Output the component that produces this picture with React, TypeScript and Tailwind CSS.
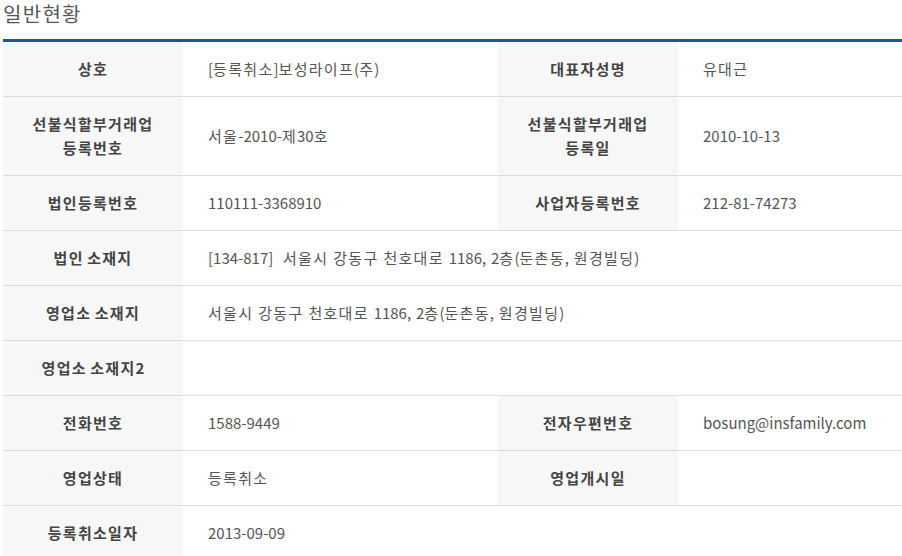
const font = { fontFamily: '"Noto Sans CJK KR", "Noto Sans", sans-serif' }

type Row = { label: string; value: string; label2?: string; value2?: string; tall?: boolean; wide?: boolean }

const rows: Row[] = [
  { label: "상호", value: "[등록취소]보성라이프(주)", label2: "대표자성명", value2: "유대근" },
  {
    label: "선불식할부거래업\n등록번호",
    value: "서울-2010-제30호",
    label2: "선불식할부거래업\n등록일",
    value2: "2010-10-13",
    tall: true,
  },
  { label: "법인등록번호", value: "110111-3368910", label2: "사업자등록번호", value2: "212-81-74273" },
  { label: "법인 소재지", value: "[134-817]  서울시 강동구 천호대로 1186, 2층(둔촌동, 원경빌딩)", wide: true },
  { label: "영업소 소재지", value: "서울시 강동구 천호대로 1186, 2층(둔촌동, 원경빌딩)", wide: true },
  { label: "영업소 소재지2", value: "", wide: true },
  { label: "전화번호", value: "1588-9449", label2: "전자우편번호", value2: "bosung@insfamily.com" },
  { label: "영업상태", value: "등록취소", label2: "영업개시일", value2: "" },
  { label: "등록취소일자", value: "2013-09-09", wide: true },
]

// hangul in the reference font runs a bit wider, so space those runs out
function Ko({ text }: { text: string }) {
  const parts = text.split(/([\uAC00-\uD7A3]+)/)
  return (
    <span>
      {parts.map((p, i) =>
        /[\uAC00-\uD7A3]/.test(p) ? (
          <span key={i} className="tracking-[1.3px]">
            {p}
          </span>
        ) : (
          p
        )
      )}
    </span>
  )
}

function Label({ text }: { text: string }) {
  return (
    <div className="flex flex-col items-center justify-center bg-[#f7f7f7] text-center text-[15px] font-bold leading-6 text-[#444]">
      {text.split("\n").map((line, i) => (
        <div key={i}>
          <Ko text={line} />
        </div>
      ))}
    </div>
  )
}

function Value({ text, span }: { text: string; span?: boolean }) {
  return (
    <div
      className={`flex items-center pl-[25px] text-[15px] text-[#555] whitespace-pre [word-spacing:1.5px] ${span ? "col-span-3" : ""}`}
    >
      <Ko text={text} />
    </div>
  )
}

export default function App() {
  return (
    <div className="w-[902px] h-[556px] overflow-hidden bg-white" style={font}>
      <h2 className="pl-[3px] pt-[1px] text-[20px] leading-[26px] tracking-[1.3px] text-[#555]">일반현황</h2>
      <div className="ml-[3px] mt-[12px] border-t-[3px] border-[#16589a]">
        {rows.map((r, i) => (
          <div
            key={i}
            className={`grid grid-cols-[180px_315px_180px_1fr] border-b border-[#dcdcdc] ${r.tall ? "h-[79px]" : "h-[55px]"}`}
          >
            <Label text={r.label} />
            {r.wide ? (
              <Value text={r.value} span />
            ) : (
              <>
                <Value text={r.value} />
                <Label text={r.label2 ?? ""} />
                <Value text={r.value2 ?? ""} />
              </>
            )}
          </div>
        ))}
      </div>
    </div>
  )
}
